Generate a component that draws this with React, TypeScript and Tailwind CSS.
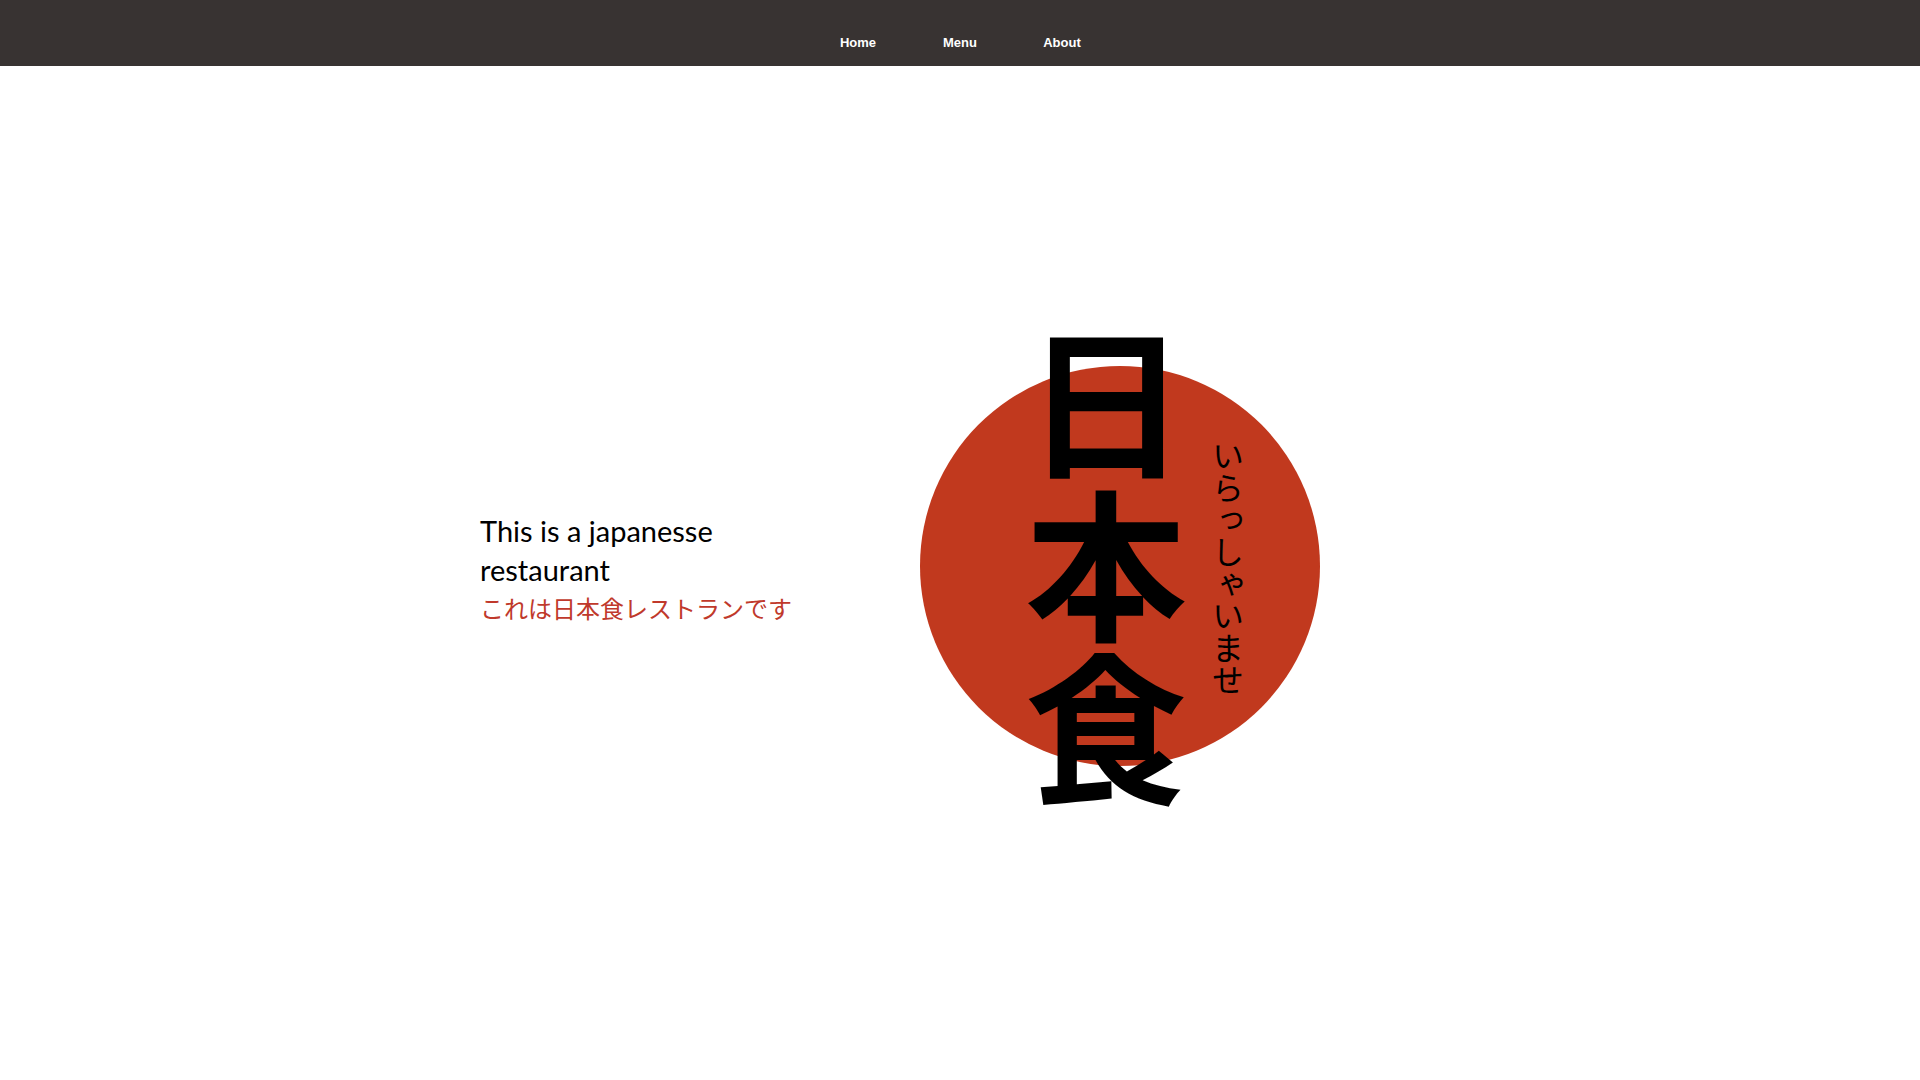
import React from 'react';

const navLinks = ['Home', 'Menu', 'About'];

const App: React.FC = () => {
  return (
    <div className="min-h-screen bg-white">
      <nav className="flex h-[66px] items-center justify-center bg-[#383332] pt-[15px]">
        <ul className="flex items-center gap-[56px]">
          {navLinks.map((link) => (
            <li key={link} className="w-[46px] text-center">
              <a href="#" className="font-['Liberation_Sans',Arial,sans-serif] text-[13px] font-bold text-white">
                {link}
              </a>
            </li>
          ))}
        </ul>
      </nav>

      <main className="flex h-[1014px] items-center pb-[14px] pl-[480px]">
        <div className="mt-[6px] w-[332px] font-['Lato','Noto_Sans_CJK_JP',sans-serif] text-[29px]">
          <p className="leading-[39px] text-black">This is a japanesse restaurant</p>
          <p className="whitespace-nowrap font-['Noto_Sans_CJK_JP',sans-serif] text-[24px] leading-[38px] text-[#c0392b]">
            これは日本食レストランです
          </p>
        </div>

        <div className="relative ml-[108px] h-[400px] w-[400px] rounded-full bg-[#c1391e]">
          <h1 className="absolute left-[106px] top-[-52px] flex w-[160px] flex-col items-center font-['Noto_Sans_CJK_JP',sans-serif] text-[162px] font-bold leading-[163px] text-black">
            <span>日</span>
            <span>本</span>
            <span>食</span>
          </h1>
          <span className="absolute left-[292px] top-[74px] font-['Noto_Sans_CJK_JP',sans-serif] text-[32px] leading-[32px] text-black [writing-mode:vertical-rl]">
            いらっしゃいませ
          </span>
        </div>
      </main>
    </div>
  );
};

export default App;
